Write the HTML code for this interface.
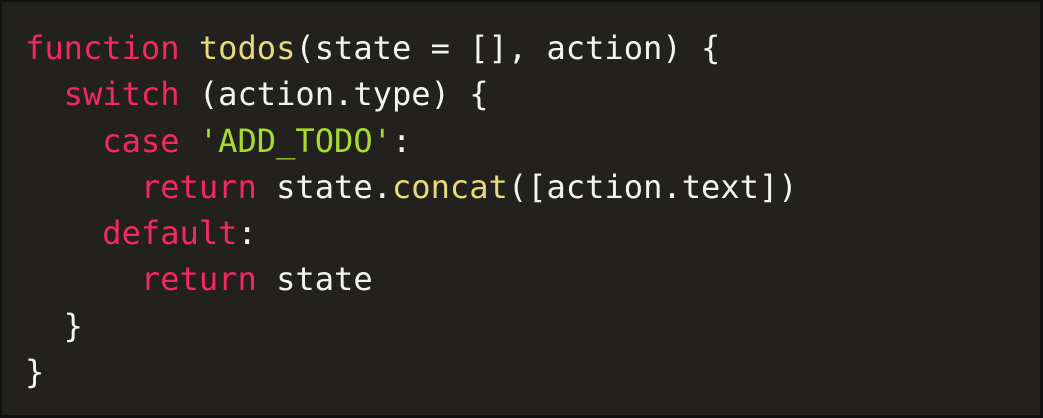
<!DOCTYPE html>
<html><head><style>
html,body{margin:0;padding:0;}
body{width:1043px;height:418px;background:#111;overflow:hidden;}
.box{position:absolute;left:2px;top:2px;width:1038px;height:413px;background:#22211e;}
pre{position:absolute;left:23px;top:23px;margin:0;font-family:"DejaVu Sans Mono","Liberation Mono",monospace;font-size:32.1px;line-height:46.3px;color:#f4f4ef;}
.k{color:#f5285f}.f{color:#e8d97a}.s{color:#a6dc2e}
</style></head><body><div class="box"><pre><span class="k">function</span> <span class="f">todos</span>(state = [], action) {
  <span class="k">switch</span> (action.type) {
    <span class="k">case</span> <span class="s">'ADD_TODO'</span>:
      <span class="k">return</span> state.<span class="f">concat</span>([action.text])
    <span class="k">default</span>:
      <span class="k">return</span> state
  }
}</pre></div></body></html>
